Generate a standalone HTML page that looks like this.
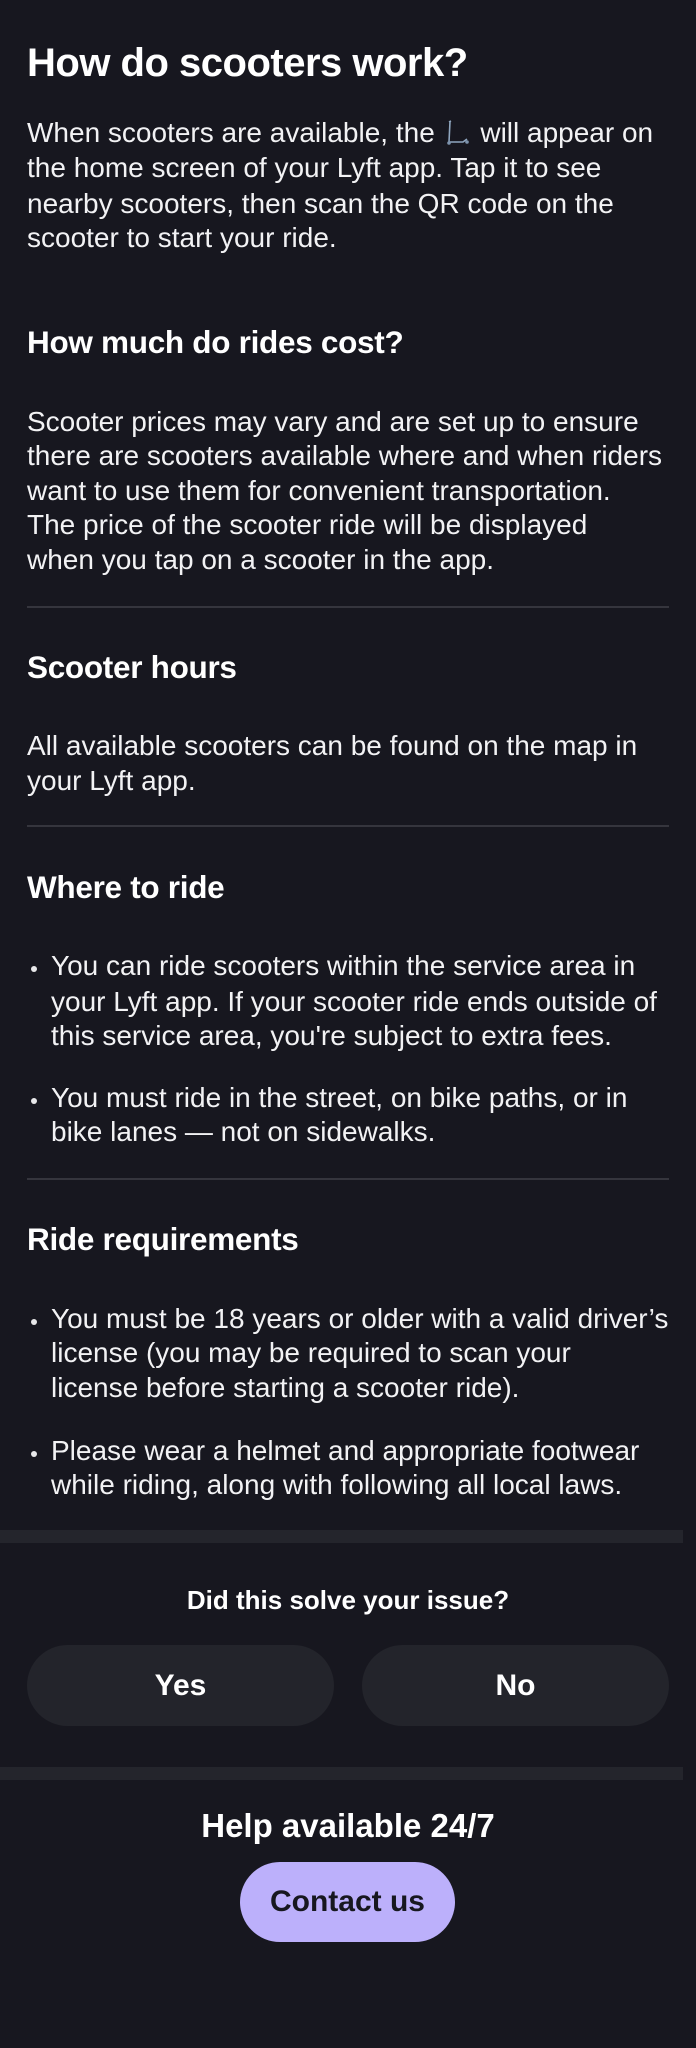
<!DOCTYPE html>
<html><head><meta charset="utf-8"><style>
html,body{margin:0;padding:0}
body{width:696px;height:2048px;background:#17171f;position:relative;overflow:hidden;font-family:"Liberation Sans",sans-serif;color:#f2f2f4}
.l{position:absolute;left:27px;white-space:nowrap;font-size:28px;line-height:34px;letter-spacing:0}
.b{left:51px}
.dot{position:absolute;left:31px;width:6px;height:6px;border-radius:3px;background:#e8e8ea}
h1,h2{position:absolute;left:27px;margin:0;white-space:nowrap;font-weight:bold;color:#fff}
h1{font-size:40px;line-height:44px;letter-spacing:-0.5px}
h2{font-size:31.5px;line-height:36px;letter-spacing:-0.3px}
.hr{position:absolute;left:27px;width:642px;height:2px;background:#35353d}
.band{position:absolute;left:0;width:683px;height:13px;background:#24252c}
.btn{position:absolute;top:1645px;height:81px;width:307px;border-radius:41px;background:#23242b;color:#fff;font-weight:bold;font-size:30px;line-height:81px;text-align:center}
.c{position:absolute;left:0;width:696px;text-align:center;font-weight:bold;color:#fff}
</style></head><body>
<h1 style="top:41px">How do scooters work?</h1>
<div class="l" style="top:116px">When scooters are available, the <svg width="30" height="30" viewBox="0 0 30 30" style="vertical-align:-6px"><path d="M8 3 L6 4 M7 3.5 L6 24 L20 24 L24 21" stroke="#8fa6bf" stroke-width="1.6" fill="none"/><circle cx="6" cy="25" r="1.8" fill="#7d93ad"/><circle cx="24" cy="24" r="1.8" fill="#7d93ad"/></svg> will appear on</div>
<div class="l" style="top:151px">the home screen of your Lyft app. Tap it to see</div>
<div class="l" style="top:187px">nearby scooters, then scan the QR code on the</div>
<div class="l" style="top:221px">scooter to start your ride.</div>

<h2 style="top:324px">How much do rides cost?</h2>
<div class="l" style="top:405px">Scooter prices may vary and are set up to ensure</div>
<div class="l" style="top:439px">there are scooters available where and when riders</div>
<div class="l" style="top:474px">want to use them for convenient transportation.</div>
<div class="l" style="top:508px">The price of the scooter ride will be displayed</div>
<div class="l" style="top:543px">when you tap on a scooter in the app.</div>
<div class="hr" style="top:606px"></div>

<h2 style="top:649px">Scooter hours</h2>
<div class="l" style="top:729px">All available scooters can be found on the map in</div>
<div class="l" style="top:764px">your Lyft app.</div>
<div class="hr" style="top:825px"></div>

<h2 style="top:869px">Where to ride</h2>
<div class="dot" style="top:966px"></div>
<div class="l b" style="top:949px">You can ride scooters within the service area in</div>
<div class="l b" style="top:985px">your Lyft app. If your scooter ride ends outside of</div>
<div class="l b" style="top:1019px">this service area, you're subject to extra fees.</div>
<div class="dot" style="top:1098px"></div>
<div class="l b" style="top:1081px">You must ride in the street, on bike paths, or in</div>
<div class="l b" style="top:1115px">bike lanes — not on sidewalks.</div>
<div class="hr" style="top:1178px"></div>

<h2 style="top:1221px">Ride requirements</h2>
<div class="dot" style="top:1319px"></div>
<div class="l b" style="top:1302px">You must be 18 years or older with a valid driver’s</div>
<div class="l b" style="top:1336px">license (you may be required to scan your</div>
<div class="l b" style="top:1371px">license before starting a scooter ride).</div>
<div class="dot" style="top:1451px"></div>
<div class="l b" style="top:1434px">Please wear a helmet and appropriate footwear</div>
<div class="l b" style="top:1468px">while riding, along with following all local laws.</div>

<div class="band" style="top:1530px"></div>
<div class="c" style="top:1584px;font-size:26px;line-height:32px">Did this solve your issue?</div>
<div class="btn" style="left:27px">Yes</div>
<div class="btn" style="left:362px">No</div>
<div class="band" style="top:1767px"></div>
<div class="c" style="top:1807px;font-size:33px;line-height:38px">Help available 24/7</div>
<div style="position:absolute;left:240px;top:1862px;width:215px;height:80px;border-radius:40px;background:#bcb0fb;color:#17171f;font-weight:bold;font-size:30px;line-height:80px;text-align:center">Contact us</div>
</body></html>
